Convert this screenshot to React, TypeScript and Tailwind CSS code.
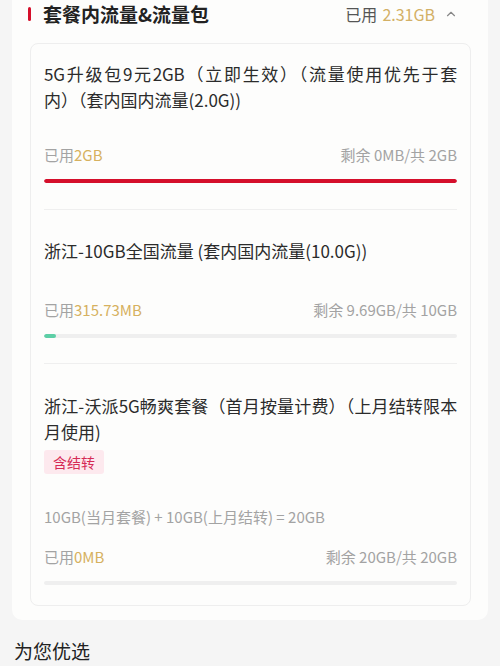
import { ChevronUp } from "lucide-react";

type Pack = {
  lines: string[];
  used: string;
  rest: string;
  pct: number;
  bar: string;
  tag?: string;
  formula?: string;
  pad: string;
  usedGap: string;
};

const packs: Pack[] = [
  {
    lines: ["5G升级包9元2GB（立即生效）（流量使用优先于套", "内）（套内国内流量(2.0G))"],
    used: "2GB",
    rest: "剩余 0MB/共 2GB",
    pct: 100,
    bar: "bg-[#d50f2b]",
    pad: "pt-[17px] pb-[26px]",
    usedGap: "mt-[32px]",
  },
  {
    lines: ["浙江-10GB全国流量 (套内国内流量(10.0G))"],
    used: "315.73MB",
    rest: "剩余 9.69GB/共 10GB",
    pct: 3,
    bar: "bg-[#5dcfa6]",
    pad: "pt-[28px] pb-[25px]",
    usedGap: "mt-[36px]",
  },
  {
    lines: ["浙江-沃派5G畅爽套餐（首月按量计费）（上月结转限本", "月使用)"],
    used: "0MB",
    rest: "剩余 20GB/共 20GB",
    pct: 0,
    bar: "bg-[#5dcfa6]",
    tag: "含结转",
    formula: "10GB(当月套餐) + 10GB(上月结转) = 20GB",
    pad: "pt-[29px] pb-[20px]",
    usedGap: "mt-[20px]",
  },
];

function PackItem({ p, last }: { p: Pack; last: boolean }) {
  return (
    <div className={`${p.pad} ${last ? "" : "border-b border-[#efefef]"}`}>
      <div className="text-[17px] leading-[26px] text-[#2b2b2b]">
        {p.lines.map((l, i) => (
          <div
            key={i}
            className={`whitespace-nowrap ${
              i < p.lines.length - 1 ? "text-justify [text-align-last:justify] tracking-[-0.2px]" : ""
            }`}
          >
            {l}
          </div>
        ))}
      </div>
      {p.tag && (
        <div className="mt-[5px] flex">
          <span className="flex h-[24px] items-center rounded-[3px] bg-[#fde9ee] px-[9px] text-[14px] text-[#d62a55]">
            {p.tag}
          </span>
        </div>
      )}
      {p.formula && (
        <div className="mt-[33px] text-[15px] leading-[20px] text-[#a3a3a3]">{p.formula}</div>
      )}
      <div className={`${p.usedGap} flex items-center justify-between text-[15px] leading-[20px] text-[#a3a3a3]`}>
        <span>
          已用<span className="text-[#d6b15f]">{p.used}</span>
        </span>
        <span>{p.rest}</span>
      </div>
      <div className="mt-[14px] h-[4px] overflow-hidden rounded-full bg-[#efefef]">
        <div className={`h-full rounded-full ${p.bar}`} style={{ width: `${p.pct}%` }} />
      </div>
    </div>
  );
}

export default function App() {
  return (
    <div
      className="min-h-[666px] bg-[#f5f5f5] px-[12px]"
      style={{ fontFamily: '"Noto Sans CJK SC", "Noto Sans", sans-serif' }}
    >
      <div className="rounded-b-[10px] bg-[#fdfdfc] pb-[14px] pl-[18px] pr-[17px]">
        <div className="flex h-[28px] items-center justify-between">
          <div className="flex items-center">
            <span className="-ml-[2px] h-[14px] w-[3px] rounded-full bg-[#d50f2b]" />
            <span className="ml-[12px] text-[19px] font-semibold text-[#222]">套餐内流量&amp;流量包</span>
          </div>
          <div className="flex items-center pr-[13px]">
            <span className="text-[16px] text-[#555]">已用</span>
            <span className="ml-[5px] text-[16px] text-[#d3b066]">2.31GB</span>
            <ChevronUp className="ml-[9px] h-[14px] w-[14px] text-[#888]" strokeWidth={2} />
          </div>
        </div>
        <div className="mt-[15px] rounded-[8px] border border-[#eeeeee] px-[13px]">
          {packs.map((p, i) => (
            <PackItem key={i} p={p} last={i === packs.length - 1} />
          ))}
        </div>
      </div>
      <div className="pl-[2px] pt-[17px] text-[19px] text-[#222]">为您优选</div>
    </div>
  );
}
